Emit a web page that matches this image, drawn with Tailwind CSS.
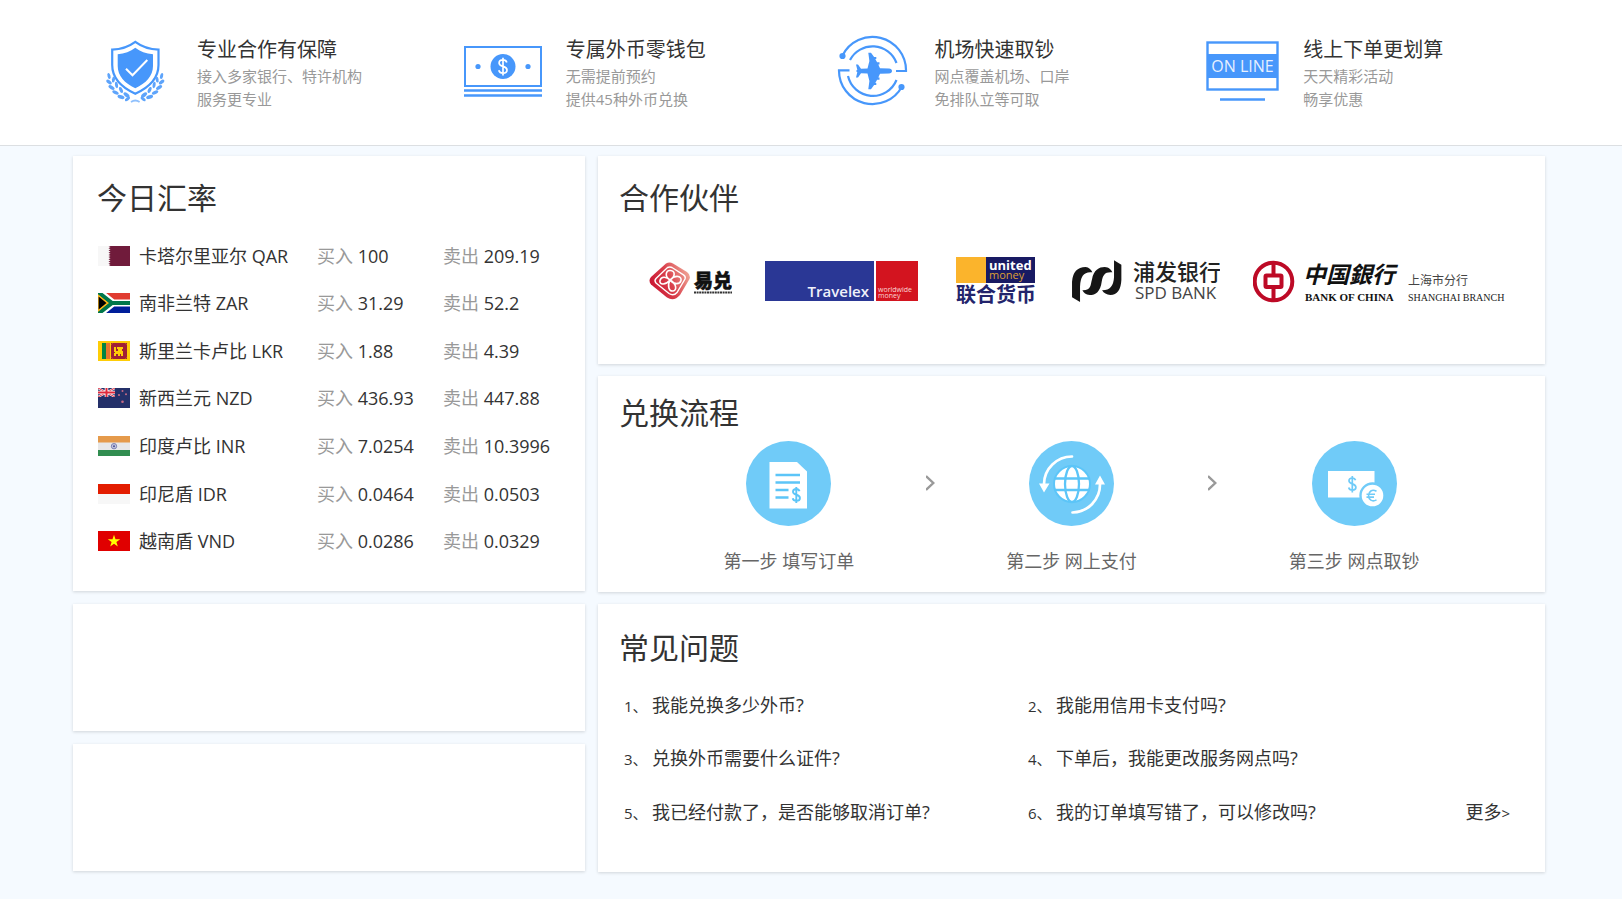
<!DOCTYPE html>
<html lang="zh-CN">
<head>
<meta charset="utf-8">
<title>外币兑换</title>
<script src="https://cdn.jsdelivr.net/npm/@tailwindcss/browser@4"></script>
</head>
<body class="min-h-screen bg-[#f5faff] font-['Open_Sans','Noto_Sans_CJK_SC',sans-serif] text-[#333]">

<header class="border-b border-[#dcdfe2] bg-white">
  <ul class="grid grid-cols-4 pt-[35px] pr-[75px] pb-[34px] pl-[72px]">
    <li class="flex">
      <div class="flex w-[125px] shrink-0 justify-center">
        <svg class="h-[72px] w-[84px]" viewBox="0 0 84 72" fill="none" aria-hidden="true">
          <path d="M42.3 6.8C36 11.5 28 14.3 19.2 14.6V30c0 13 9.500 22.500 23.100 28.700C56 52.500 65.500 43 65.500 30V14.600C56.600 14.300 48.600 11.500 42.300 6.800Z" stroke="#4797fb" stroke-width="2.200"/>
          <path d="M42.300 12.700C37.500 16.500 31.500 18.700 24.700 19.200V31c0 10 7 17.200 17.600 22.300C53 48.200 60 41 60 31V19.200C53 18.700 47 16.500 42.300 12.700Z" fill="#4797fb"/>
          <path d="M33 33.700l6.500 6.600L54.300 25" stroke="#fff" stroke-width="2"/>
          <g fill="#5ea4fb">
            <g id="laurel">
              <ellipse cx="16" cy="41" rx="1.500" ry="3" transform="rotate(-15 16 41)"/>
              <ellipse cx="16" cy="47" rx="1.700" ry="3.200" transform="rotate(-50 16 47)"/>
              <ellipse cx="20.500" cy="44.500" rx="1.500" ry="3" transform="rotate(10 20.500 44.500)"/>
              <ellipse cx="18.500" cy="52.500" rx="1.700" ry="3.400" transform="rotate(-58 18.500 52.500)"/>
              <ellipse cx="23.500" cy="50" rx="1.500" ry="3.200" transform="rotate(-8 23.500 50)"/>
              <ellipse cx="22.500" cy="57.500" rx="1.700" ry="3.400" transform="rotate(-65 22.500 57.500)"/>
              <ellipse cx="28" cy="55" rx="1.600" ry="3.200" transform="rotate(-25 28 55)"/>
              <ellipse cx="28" cy="62" rx="1.800" ry="3.600" transform="rotate(-72 28 62)"/>
              <ellipse cx="33.500" cy="60" rx="1.800" ry="3.600" transform="rotate(-50 33.500 60)"/>
              <ellipse cx="34.500" cy="64" rx="1.500" ry="3" transform="rotate(-125 34.500 64)"/>
            </g>
            <use href="#laurel" transform="translate(84.600 0) scale(-1 1)"/>
          </g>
          <path d="M38 67q4.300-3 8.600 0" stroke="#8fc0fd" stroke-width="1.800"/>
        </svg>
      </div>
      <div>
        <h3 class="text-xl leading-[30px]">专业合作有保障</h3>
        <p class="text-[15px] leading-[23px] text-[#999]">接入多家银行、特许机构<br>服务更专业</p>
      </div>
    </li>
    <li class="flex">
      <div class="flex w-[125px] shrink-0 justify-center">
        <svg class="h-[72px] w-[84px]" viewBox="0 0 84 72" fill="none" aria-hidden="true">
          <rect x="4" y="12" width="76" height="39" stroke="#4797fb" stroke-width="2"/>
          <path d="M3 55.500h78M3 60.500h78" stroke="#4797fb" stroke-width="2.400"/>
          <circle cx="42" cy="31.500" r="12.500" fill="#4797fb"/>
          <circle cx="17" cy="31.500" r="2.600" fill="#4797fb"/>
          <circle cx="67" cy="31.500" r="2.600" fill="#4797fb"/>
          <path d="M45.800 27.500c-.5-1.700-1.900-2.600-3.800-2.600-2.300 0-3.900 1.200-3.900 3.100 0 4.300 7.900 2.500 7.900 7 0 2-1.700 3.200-4 3.200-2.200 0-3.700-1-4.200-2.900M42 22.800v17.600" stroke="#fff" stroke-width="1.700"/>
        </svg>
      </div>
      <div>
        <h3 class="text-xl leading-[30px]">专属外币零钱包</h3>
        <p class="text-[15px] leading-[23px] text-[#999]">无需提前预约<br>提供45种外币兑换</p>
      </div>
    </li>
    <li class="flex">
      <div class="flex w-[125px] shrink-0 justify-center">
        <svg class="h-[72px] w-[84px]" viewBox="0 0 84 72" fill="none" aria-hidden="true">
          <g stroke="#4797fb" stroke-width="2.200">
            <path d="M12.500 20.500A33.500 33.500 0 0 1 76 36H66"/>
            <path d="M72 51.500A33.500 33.500 0 0 1 9 35.300H19.500"/>
            <path d="M20 25A25.500 25.500 0 0 1 66.500 28"/>
            <path d="M18 41A25.500 25.500 0 0 0 66.500 45"/>
          </g>
          <circle cx="12.500" cy="21" r="3.100" fill="#4797fb"/>
          <circle cx="71.500" cy="52" r="3.100" fill="#4797fb"/>
          <path transform="translate(0 -1)" d="M62 37c0 1.400-1.200 2.300-3 2.400L50 39.800 48.300 43.500h1.200v2.200h-2.400L45.300 49h1v2h-2.200L41 55.300h-2.700L39.400 47 37.500 39.600 31 39.200 28 43.500h-2l1.300-5.200-1.300-1.300 1.300-1.300L26 30.500h2l3 4.300 6.500-.4L39.400 27 38.300 18.700H41L44.100 23h2.200v2h-1l1.800 3.300h2.400v2.200h-1.200L50 34.200l9 .4c1.800.1 3 1 3 2.400Z" fill="#4797fb"/>
        </svg>
      </div>
      <div>
        <h3 class="text-xl leading-[30px]">机场快速取钞</h3>
        <p class="text-[15px] leading-[23px] text-[#999]">网点覆盖机场、口岸<br>免排队立等可取</p>
      </div>
    </li>
    <li class="flex">
      <div class="flex w-[125px] shrink-0 justify-center">
        <svg class="h-[72px] w-[84px]" viewBox="0 0 84 72" fill="none" aria-hidden="true">
          <rect x="8.500" y="7.500" width="70" height="47" stroke="#4797fb" stroke-width="2.400"/>
          <rect x="8" y="19" width="71" height="24" fill="#4797fb"/>
          <path d="M21 64.500h45" stroke="#4797fb" stroke-width="2.600"/>
          <text x="43.500" y="37" text-anchor="middle" font-size="16" fill="#e6f0ff">ON LINE</text>
        </svg>
      </div>
      <div>
        <h3 class="text-xl leading-[30px]">线上下单更划算</h3>
        <p class="text-[15px] leading-[23px] text-[#999]">天天精彩活动<br>畅享优惠</p>
      </div>
    </li>
  </ul>
</header>

<main class="grid grid-cols-[512fr_947fr] items-start gap-x-[13px] pt-[10px] pr-[77px] pb-[27px] pl-[73px]">
  <div class="flex flex-col gap-[13px]">
    <section class="bg-white pt-6 pb-[25px] pl-6 shadow-[0_1px_3px_rgba(0,0,0,0.15)]">
      <h2 class="text-3xl leading-9">今日汇率</h2>
      <table class="mt-4 mb-px ml-px h-[333px] w-full table-fixed text-left text-lg leading-6 whitespace-nowrap">
        <colgroup><col class="w-[219px]"><col class="w-[126px]"><col></colgroup>
        <tbody>
          <tr>
            <th scope="row" class="font-normal"><div class="flex items-center gap-[9px]">
              <svg class="h-5 w-8" viewBox="0 0 32 20" aria-hidden="true"><path fill="#f7f7f7" d="M0 0h32v20H0z"/><path fill="#701b3b" d="M32 0H10.500l2 1.100-2 1.100 2 1.100-2 1.100 2 1.200-2 1.100 2 1.100-2 1.100 2 1.100-2 1.100 2 1.100-2 1.100 2 1.100-2 1.200 2 1.100-2 1.100 2 1.100-2 1.300H32z"/></svg>
              卡塔尔里亚尔 QAR</div></th>
            <td><span class="text-[#999]">买入</span> 100</td>
            <td><span class="text-[#999]">卖出</span> 209.19</td>
          </tr>
          <tr>
            <th scope="row" class="font-normal"><div class="flex items-center gap-[9px]">
              <svg class="h-5 w-8" viewBox="0 0 32 20" aria-hidden="true"><path fill="#e03c31" d="M0 0h32v10H0z"/><path fill="#001e9a" d="M0 10h32v10H0z"/><path d="M0-2 15 10 0 22M15 10h17" fill="none" stroke="#fff" stroke-width="7"/><path d="M0-2V22L15 10z" fill="#ffb81c"/><path d="M0-1 14 10 0 21M14 10h18" fill="none" stroke="#00774b" stroke-width="4"/><path d="M0 2.200 9.500 10 0 17.800z" fill="#000" stroke="#ffb81c" stroke-width="1.300"/></svg>
              南非兰特 ZAR</div></th>
            <td><span class="text-[#999]">买入</span> 31.29</td>
            <td><span class="text-[#999]">卖出</span> 52.2</td>
          </tr>
          <tr>
            <th scope="row" class="font-normal"><div class="flex items-center gap-[9px]">
              <svg class="h-5 w-8" viewBox="0 0 32 20" aria-hidden="true"><path fill="#fecd07" d="M0 0h32v20H0z"/><path fill="#018443" d="M4 2h4v16H4z"/><path fill="#e8762b" d="M8 2h4v16H8z"/><path fill="#a02036" d="M13 2h16v16H13z"/><path fill="#fecd07" d="M16 6h2v4h2V8h-1V6h6v2h-1v2h1v5h-2v-2h-1v2h-2v-2h-2v2h-2v-3h1v-1h-1z"/><path stroke="#d57a20" d="M13.500 3.500l1-1M28.500 3.500l-1-1M13.500 16.500l1 1M28.500 16.500l-1 1"/></svg>
              斯里兰卡卢比 LKR</div></th>
            <td><span class="text-[#999]">买入</span> 1.88</td>
            <td><span class="text-[#999]">卖出</span> 4.39</td>
          </tr>
          <tr>
            <th scope="row" class="font-normal"><div class="flex items-center gap-[9px]">
              <svg class="h-5 w-8" viewBox="0 0 32 20" aria-hidden="true"><path fill="#243069" d="M0 0h32v20H0z"/><svg width="17" height="9" viewBox="0 0 17 9"><path d="M0 0l17 9M17 0L0 9" stroke="#fff" stroke-width="2"/><path d="M0 0l17 9M17 0L0 9" stroke="#e0293b"/><path d="M8.500 0v9M0 4.500h17" stroke="#fff" stroke-width="3.600"/><path d="M8.500 0v9M0 4.500h17" stroke="#e0293b" stroke-width="2"/></svg><g fill="#c86a85"><circle cx="24.500" cy="3" r="1"/><circle cx="21" cy="7" r="1.100"/><circle cx="28" cy="6.300" r="1"/><circle cx="24.500" cy="13.800" r="1.300"/></g></svg>
              新西兰元 NZD</div></th>
            <td><span class="text-[#999]">买入</span> 436.93</td>
            <td><span class="text-[#999]">卖出</span> 447.88</td>
          </tr>
          <tr>
            <th scope="row" class="font-normal"><div class="flex items-center gap-[9px]">
              <svg class="h-5 w-8" viewBox="0 0 32 20" aria-hidden="true"><path fill="#e8e8e8" d="M0 0h32v20H0z"/><path fill="#e59a4b" d="M0 0h32v6.500H0z"/><path fill="#318d50" d="M0 14h32v6H0z"/><circle cx="16" cy="10.200" r="2.700" fill="#c3c6dc" stroke="#8085b5"/><circle cx="16" cy="10.200" r="1" fill="#4a5094"/></svg>
              印度卢比 INR</div></th>
            <td><span class="text-[#999]">买入</span> 7.0254</td>
            <td><span class="text-[#999]">卖出</span> 10.3996</td>
          </tr>
          <tr>
            <th scope="row" class="font-normal"><div class="flex items-center gap-[9px]">
              <svg class="h-5 w-8" viewBox="0 0 32 20" aria-hidden="true"><path fill="#f7f7f7" d="M0 0h32v20H0z"/><path fill="#e31d00" d="M0 0h32v10H0z"/></svg>
              印尼盾 IDR</div></th>
            <td><span class="text-[#999]">买入</span> 0.0464</td>
            <td><span class="text-[#999]">卖出</span> 0.0503</td>
          </tr>
          <tr>
            <th scope="row" class="font-normal"><div class="flex items-center gap-[9px]">
              <svg class="h-5 w-8" viewBox="0 0 32 20" aria-hidden="true"><path fill="#e00000" d="M0 0h32v20H0z"/><path fill="#ff0" d="M16 3.800l1.500 4.500h4.700l-3.800 2.800 1.400 4.500-3.800-2.800-3.800 2.800 1.400-4.500-3.800-2.800h4.700z"/></svg>
              越南盾 VND</div></th>
            <td><span class="text-[#999]">买入</span> 0.0286</td>
            <td><span class="text-[#999]">卖出</span> 0.0329</td>
          </tr>
        </tbody>
      </table>
    </section>
    <section class="h-[127px] bg-white shadow-[0_1px_3px_rgba(0,0,0,0.15)]"></section>
    <section class="h-[127px] bg-white shadow-[0_1px_3px_rgba(0,0,0,0.15)]"></section>
  </div>

  <div class="flex flex-col gap-3">
    <section class="bg-white pt-6 pb-[58px] shadow-[0_1px_3px_rgba(0,0,0,0.15)]">
      <h2 class="pl-[21px] text-3xl leading-9">合作伙伴</h2>
      <ul class="mt-10 flex justify-between pr-[37px] pl-[51px]">
        <li>
          <svg class="h-[50px] w-[83px]" viewBox="0 0 83 50" role="img" aria-label="易兑">
            <defs><linearGradient id="red" x1="0" y1=".7" x2="1" y2=".3"><stop offset="0" stop-color="#c8102e"/><stop offset=".5" stop-color="#d9404c"/><stop offset="1" stop-color="#f0a898"/></linearGradient></defs>
            <path d="M17 7.500Q20.500 5.500 24 7.500L38 16Q42 19 40.500 23L31 39Q25 46 18 41.500L2 28.500Q-1 24.500 2 21Z" fill="url(#red)"/>
            <path d="M18.500 11.500Q21 10.500 23 11.500L34.500 18.800Q37 20.500 36 23L28 36.500Q24.500 40.500 20 37.500L7 27Q5 24.500 7 22.500Z" fill="none" stroke="#fff" stroke-width="1.400"/>
            <g fill="none" stroke="#fff" stroke-width="1.600"><path d="M21 24C15 20 17 14 21.500 14.500S27 20 21 24C27 18 33 20.500 32 24.500S25 29 21 24C28 28 28 34.500 24 35S18 30 21 24C16 30 10 28.500 11 24.500S17 20 21 24Z"/></g>
            <text x="45" y="32" font-size="19" font-weight="900" fill="#111" stroke="#111" stroke-width=".6">易兑</text>
            <path d="M45 36.500h38" stroke="#333" stroke-width="2" stroke-dasharray="2 .6"/>
          </svg>
        </li>
        <li>
          <svg class="h-[50px] w-[158px]" viewBox="0 0 158 50" role="img" aria-label="Travelex">
            <path fill="#2a3795" d="M0 5h109v40H0z"/><path fill="#d3141f" d="M111 5h42v40h-42z"/>
            <text x="104" y="41" text-anchor="end" font-size="15" font-weight="600" fill="#f0f1fa">Travelex</text>
            <g font-size="7" fill="#fbd5d6"><text x="113" y="36">worldwide</text><text x="113" y="42">money</text></g>
          </svg>
        </li>
        <li>
          <svg class="h-[50px] w-[83px]" viewBox="0 0 83 50" role="img" aria-label="联合货币">
            <path fill="#fbb42c" d="M0 1h30v26H0z"/><path fill="#181a63" d="M30 1h49v26H30z"/>
            <text x="33" y="14" font-size="13" font-weight="700" fill="#fff">united</text>
            <text x="33" y="23" font-size="11" fill="#dd9f33">money</text>
            <text x="0" y="46" font-size="20" font-weight="700" fill="#23246c">联合货币</text>
          </svg>
        </li>
        <li>
          <svg class="h-[50px] w-[148px]" viewBox="0 0 148 50" role="img" aria-label="浦发银行">
            <g transform="translate(-22.300 -36) scale(.3333)" fill="#161616">
              <path d="M67 232V185Q70 142 108 141Q122 143 128 157Q92 152 91 200V246Z"/>
              <path d="M98 211C125 212 122 195 127 178C132 150 148 141 165 141C178 142 184 148 188 157C165 155 160 165 156 185C152 215 138 225 120 225C108 224 102 219 98 211Z"/>
              <path d="M193 121L215 134V180Q213 224 182 225Q165 224 157 211Q191 212 193 172Z"/>
            </g>
            <text x="61" y="24" font-size="22" font-weight="500" fill="#222">浦发银行</text>
            <text x="63" y="43" font-size="17" fill="#444">SPD BANK</text>
          </svg>
        </li>
        <li>
          <svg class="h-[50px] w-[255px]" viewBox="0 0 255 50" role="img" aria-label="中国银行 上海市分行">
            <g fill="none" stroke="#bd0a26"><circle cx="20.500" cy="25.500" r="18.800" stroke-width="4"/><rect x="12.500" y="19.500" width="16" height="11.500" rx="1" stroke-width="4"/><path d="M20.500 7v12M20.500 31v13" stroke-width="4"/></g>
            <text x="50" y="27" font-size="23" font-style="italic" font-weight="700" fill="#111">中国銀行</text>
            <text x="52" y="45" font-size="11" font-weight="700" font-family="Liberation Serif" fill="#111">BANK OF CHINA</text>
            <text x="155" y="29" font-size="12" fill="#444">上海市分行</text>
            <text x="155" y="45" font-size="10" font-family="Liberation Serif" fill="#222">SHANGHAI BRANCH</text>
          </svg>
        </li>
      </ul>
    </section>

    <section class="bg-white pt-[19px] pb-[19px] shadow-[0_1px_3px_rgba(0,0,0,0.15)]">
      <h2 class="pl-[21px] text-3xl leading-9">兑换流程</h2>
      <ol class="mt-[10px] flex px-[54px] text-lg leading-6 text-[#666]">
        <li class="flex flex-1 flex-col items-center gap-[23px]">
          <svg class="size-[85px]" viewBox="0 0 85 85" fill="none" aria-hidden="true">
            <circle cx="42.500" cy="42.500" r="42.500" fill="#70cbf8"/>
            <path d="M23.500 21H51L61 30.500V67.500H23.500Z" fill="#fff"/>
            <path d="M29.500 34H54M29.500 41.500H54M29.500 49H42.500M29.500 56.500H42.500" stroke="#5cc5f8" stroke-width="2.600"/>
            <path d="M53.500 50.300c-.4-1.500-1.600-2.300-3.200-2.300-2 0-3.300 1-3.300 2.700 0 3.800 6.900 2.300 6.900 6.200 0 1.800-1.500 2.900-3.500 2.900s-3.300-1-3.700-2.600M50.300 46v16" stroke="#5cc5f8" stroke-width="1.900"/>
          </svg>
          <span>第一步 填写订单</span>
        </li>
        <li class="w-[9px] shrink-0 pt-[34px]" aria-hidden="true"><svg class="h-4 w-[9px]" viewBox="0 0 9 16" fill="none"><path d="M0 1l7.300 7L0 15" stroke="#999" stroke-width="2.400"/></svg></li>
        <li class="flex flex-1 flex-col items-center gap-[23px]">
          <svg class="size-[85px]" viewBox="0 0 85 85" fill="none" aria-hidden="true">
            <circle cx="42.500" cy="42.500" r="42.500" fill="#70cbf8"/>
            <circle cx="43" cy="43" r="18" fill="#fff" stroke="#5cc5f8" stroke-width="2"/>
            <g stroke="#5cc5f8" stroke-width="2.300"><ellipse cx="43" cy="43" rx="7" ry="18"/><path d="M25 37.500H61M25 49H61"/></g>
            <path d="M43 15.500A28 28 0 0 0 15 43M43.500 71.500A28 28 0 0 0 71 43" stroke="#fff" stroke-width="2.700" stroke-linecap="round"/>
            <path d="M10 42.500H20.500L15 51.500ZM66 43.500H76L71 34.500Z" fill="#fff"/>
          </svg>
          <span>第二步 网上支付</span>
        </li>
        <li class="w-[9px] shrink-0 pt-[34px]" aria-hidden="true"><svg class="h-4 w-[9px]" viewBox="0 0 9 16" fill="none"><path d="M0 1l7.300 7L0 15" stroke="#999" stroke-width="2.400"/></svg></li>
        <li class="flex flex-1 flex-col items-center gap-[23px]">
          <svg class="size-[85px]" viewBox="0 0 85 85" fill="none" aria-hidden="true">
            <circle cx="42.500" cy="42.500" r="42.500" fill="#70cbf8"/>
            <path d="M16 30H62.500V56.500H16Z" fill="#fff"/>
            <path d="M43.500 39.300c-.4-1.500-1.600-2.300-3.200-2.300-2 0-3.300 1-3.300 2.700 0 3.800 6.900 2.500 6.900 6.500 0 1.800-1.500 2.900-3.500 2.900s-3.300-1-3.700-2.600M40.300 35v16.500" stroke="#70cbf8" stroke-width="1.700"/>
            <circle cx="60.500" cy="54.500" r="12" fill="#fff" stroke="#70cbf8" stroke-width="2.400"/>
            <path d="M64.500 50.300c-4.500-2.500-7.900.2-7.900 4.300s3.400 6.700 7.900 4.300M54.500 53.300h8.500M54.500 56.100h7.500" stroke="#70cbf8" stroke-width="1.600"/>
          </svg>
          <span>第三步 网点取钞</span>
        </li>
      </ol>
    </section>

    <section class="bg-white pt-[26px] pr-[35px] pb-[33px] shadow-[0_1px_3px_rgba(0,0,0,0.15)]">
      <h2 class="pl-[21px] text-3xl leading-9">常见问题</h2>
      <div class="mt-[13px] grid h-[160px] grid-cols-[404fr_482fr] grid-rows-3 items-center pl-[26px] text-lg leading-6">
        <a href="#q1" class="flex items-baseline"><span class="w-7 text-[15px]">1、</span>我能兑换多少外币?</a>
        <a href="#q2" class="flex items-baseline"><span class="w-7 text-[15px]">2、</span>我能用信用卡支付吗?</a>
        <a href="#q3" class="flex items-baseline"><span class="w-7 text-[15px]">3、</span>兑换外币需要什么证件?</a>
        <a href="#q4" class="flex items-baseline"><span class="w-7 text-[15px]">4、</span>下单后，我能更改服务网点吗?</a>
        <a href="#q5" class="flex items-baseline"><span class="w-7 text-[15px]">5、</span>我已经付款了，是否能够取消订单?</a>
        <div class="flex items-baseline justify-between">
          <a href="#q6" class="flex items-baseline"><span class="w-7 text-[15px]">6、</span>我的订单填写错了，可以修改吗?</a>
          <a href="#more">更多<span class="text-[15px]">&gt;</span></a>
        </div>
      </div>
    </section>
  </div>
</main>
</body>
</html>
